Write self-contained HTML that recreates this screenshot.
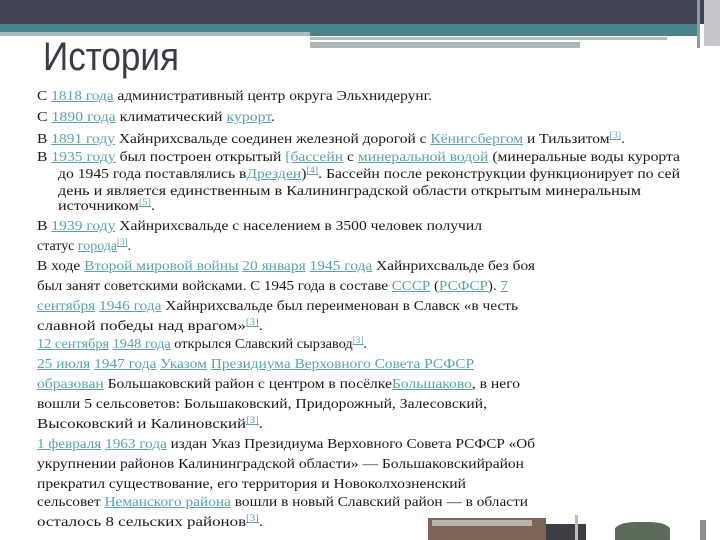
<!DOCTYPE html>
<html><head><meta charset="utf-8">
<style>
html,body{margin:0;padding:0;background:#fff;width:720px;height:540px;overflow:hidden;position:relative}
.l{position:absolute;white-space:nowrap;font-family:"Liberation Serif","DejaVu Serif",serif;font-size:14px;line-height:16px;color:#1a1a1a;transform-origin:0 50%}
a{color:#5aa3ad;text-decoration:underline}
sup{font-size:9px;vertical-align:5px;line-height:0}
#t{position:absolute;left:43px;top:35px;font-family:"Liberation Sans","DejaVu Sans",sans-serif;font-size:40px;line-height:44px;color:#3a3b47;transform-origin:0 50%}
</style></head><body>
<div style="position:absolute;left:0;top:0;width:720px;height:24px;background:#414454"></div>
<div style="position:absolute;left:0;top:24px;width:700px;height:9px;background:#47868b"></div>
<div style="position:absolute;left:0;top:32px;width:310px;height:4px;background:#a8bcc2"></div>
<div style="position:absolute;left:310px;top:33px;width:390px;height:3px;background:#4f8487"></div>
<div style="position:absolute;left:310px;top:37px;width:357px;height:3px;background:#b4c1c3"></div>
<div style="position:absolute;left:310px;top:42px;width:270px;height:6px;background:#a9b6b8"></div>
<div style="position:absolute;left:697px;top:0;width:3px;height:48px;background:#8e9aa6"></div>
<div style="position:absolute;left:704px;top:0;width:16px;height:46px;background:#c5c6cc"></div>
<div id="t">История</div>

<div class="l" style="left:37px;top:89px">С <a>1818 года</a> административный центр округа Эльхнидерунг.</div>
<div class="l" style="left:37px;top:110px">С <a>1890 года</a> климатический <a>курорт</a>.</div>
<div class="l" style="left:37px;top:132px">В <a>1891 году</a> Хайнрихсвальде соединен железной дорогой с <a>Кёнигсбергом</a> и Тильзитом<sup><a>[3]</a></sup>.</div>
<div class="l" style="left:37px;top:150px">В <a>1935 году</a> был построен открытый <a>[бассейн</a> с <a>минеральной водой</a> (минеральные воды курорта</div>
<div class="l" style="left:58px;top:167px">до 1945 года поставлялись в<a>Дрезден</a>)<sup><a>[4]</a></sup>. Бассейн после реконструкции функционирует по сей</div>
<div class="l" style="left:58px;top:184px">день и является единственным в Калининградской области открытым минеральным</div>
<div class="l" style="left:58px;top:199px">источником<sup><a>[5]</a></sup>.</div>
<div class="l" style="left:37px;top:219px">В <a>1939 году</a> Хайнрихсвальде с населением в 3500 человек получил</div>
<div class="l" style="left:37px;top:239px">статус <a>города</a><sup><a>[3]</a></sup>.</div>
<div class="l" style="left:37px;top:259px">В ходе <a>Второй мировой войны</a> <a>20 января</a> <a>1945 года</a> Хайнрихсвальде без боя</div>
<div class="l" style="left:37px;top:279px">был занят советскими войсками. С 1945 года в составе <a>СССР</a> (<a>РСФСР</a>). <a>7</a></div>
<div class="l" style="left:37px;top:299px"><a>сентября</a> <a>1946 года</a> Хайнрихсвальде был переименован в Славск «в честь</div>
<div class="l" style="left:37px;top:319px">славной победы над врагом»<sup><a>[3]</a></sup>.</div>
<div class="l" style="left:37px;top:337px"><a>12 сентября</a> <a>1948 года</a> открылся Славский сырзавод<sup><a>[3]</a></sup>.</div>
<div class="l" style="left:37px;top:357px"><a>25 июля</a> <a>1947 года</a> <a>Указом</a> <a>Президиума Верховного Совета РСФСР</a></div>
<div class="l" style="left:37px;top:377px"><a>образован</a> Большаковский район с центром в посёлке<a>Большаково</a>, в него</div>
<div class="l" style="left:37px;top:397px">вошли 5 сельсоветов: Большаковский, Придорожный, Залесовский,</div>
<div class="l" style="left:37px;top:417px">Высоковский и Калиновский<sup><a>[3]</a></sup>.</div>
<div class="l" style="left:37px;top:437px"><a>1 февраля</a> <a>1963 года</a> издан Указ Президиума Верховного Совета РСФСР «Об</div>
<div class="l" style="left:37px;top:457px">укрупнении районов Калининградской области» — Большаковскийрайон</div>
<div class="l" style="left:37px;top:477px">прекратил существование, его территория и Новоколхозненский</div>
<div class="l" style="left:37px;top:495px">сельсовет <a>Неманского района</a> вошли в новый Славский район — в области</div>
<div class="l" style="left:37px;top:515px">осталось 8 сельских районов<sup><a>[3]</a></sup>.</div>

<div style="position:absolute;left:428px;top:518px;width:118px;height:22px;background:#7d6456"></div>
<div style="position:absolute;left:432px;top:520px;width:100px;height:6px;background:#b8b5ae"></div>
<div style="position:absolute;left:546px;top:524px;width:40px;height:16px;background:#3d3f44"></div>
<div style="position:absolute;left:575px;top:515px;width:3px;height:25px;background:#bbb"></div>
<div style="position:absolute;left:615px;top:522px;width:55px;height:18px;background:#5c6b5a;border-radius:40% 40% 0 0"></div>
<div style="position:absolute;left:700px;top:520px;width:6px;height:20px;background:#8a8f88"></div>

<script>
var W=[432,275,625,680,680,641,155,482,131,535,508,518,263,367,474,520,487,263,535,524,466,528,263];
var L=document.querySelectorAll('.l');
for(var i=0;i<L.length;i++){var e=L[i];var left=parseFloat(e.style.left);var w=e.getBoundingClientRect().width;var s=(W[i]-left)/w;e.style.transform='scaleX('+s+')';}
var t=document.getElementById('t');var tw=t.getBoundingClientRect().width;t.style.transform='scaleX('+(136/tw)+')';
</script>
</body></html>
